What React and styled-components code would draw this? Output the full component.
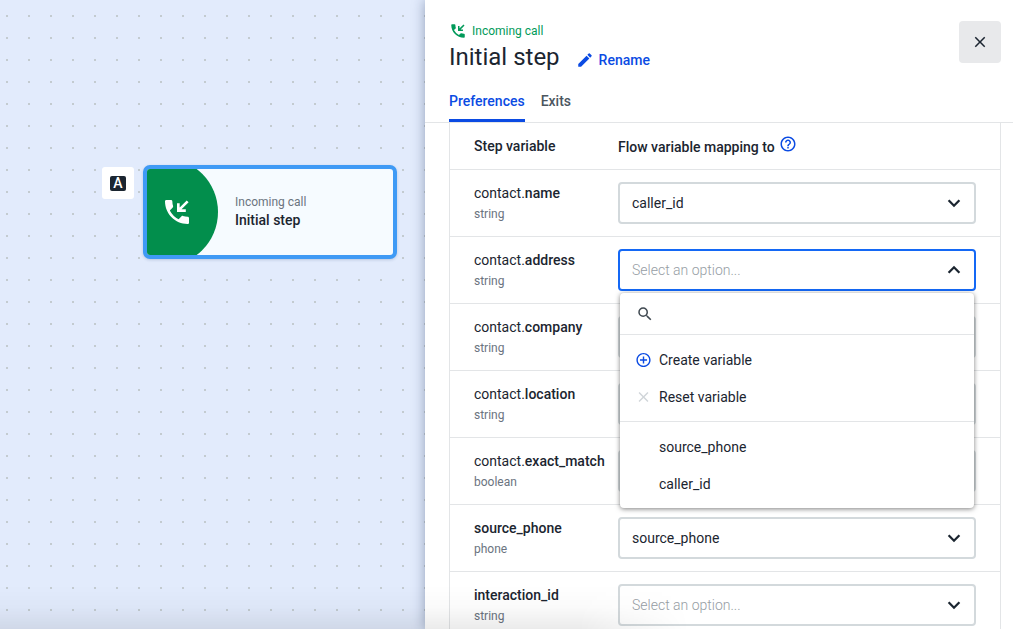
import React, { useState } from 'react';
import styled, { createGlobalStyle } from 'styled-components';
import {
  MdAddCircleOutline,
  MdClose,
  MdEdit,
  MdHelpOutline,
  MdSearch,
} from 'react-icons/md';

const GlobalStyle = createGlobalStyle`
  *, *::before, *::after {
    box-sizing: border-box;
  }
  body {
    margin: 0;
    font-family: Roboto, 'Liberation Sans', sans-serif;
    font-size: 14px;
    line-height: 20px;
    color: #1b2530;
    background: #e2ebfc;
  }
  button, input, select {
    font: inherit;
    color: inherit;
  }
`

const Page = styled.div`
  position: relative;
  display: grid;
  grid-template-columns: minmax(0, 1fr) minmax(0, 588px);
  height: 100vh;
  overflow: hidden;
`

const BottomShade = styled.div`
  position: absolute;
  left: 0;
  bottom: 0;
  width: 68%;
  height: 44px;
  pointer-events: none;
  background: linear-gradient(to top, rgba(0, 0, 0, 0.08), rgba(0, 0, 0, 0.02) 50%, rgba(0, 0, 0, 0));
  mask-image: linear-gradient(to right, #000 84%, transparent);
`

/* canvas */

const Canvas = styled.main`
  position: relative;
  background-color: #e2ebfc;
  background-image: conic-gradient(from 270deg at 2px 2px, #c3cbd0 90deg, transparent 0);
  background-size: 22px 22px;
  background-position: 6px 15px;
`

const Node = styled.div`
  position: absolute;
  top: 165px;
  left: 102px;
  display: flex;
  align-items: flex-start;
  gap: 9px;
`

const NodeBadge = styled.div`
  display: flex;
  align-items: center;
  justify-content: center;
  width: 32px;
  height: 32px;
  margin-top: 2px;
  border-radius: 3px;
  background: #fff;
`

const Letter = styled.span`
  width: 16px;
  border-radius: 2px;
  background: #1b2530;
  color: #fff;
  font-weight: 500;
  line-height: 15px;
  text-align: center;
`

const NodeCard = styled.button`
  display: flex;
  align-items: center;
  width: 254px;
  height: 94px;
  padding: 0;
  border: 4px solid #3f9af5;
  border-radius: 7px;
  background: #f6fbff;
  box-shadow: 0 1px 3px rgba(30, 60, 110, 0.2);
  text-align: left;
  overflow: hidden;
  cursor: pointer;
`

const NodeIcon = styled.span`
  display: flex;
  align-items: center;
  align-self: stretch;
  width: 71px;
  padding-left: 14px;
  color: #fff;
  background: #028e4c;
  clip-path: circle(54px at 17px 50%);
`

const NodeText = styled.span`
  display: flex;
  flex-direction: column;
  padding: 0 0 2px 17px;
`

const NodeType = styled.span`
  font-size: 12px;
  line-height: 18px;
  color: #6b7480;
`

const NodeName = styled.span`
  line-height: 18px;
  font-weight: 500;
`

/* side panel */

const Panel = styled.aside`
  position: relative;
  display: flex;
  flex-direction: column;
  min-height: 0;
  background: #fff;
  box-shadow: 0 0 12px rgba(25, 45, 85, 0.4);
`

const PanelHeader = styled.header`
  display: flex;
  justify-content: space-between;
  align-items: flex-start;
  padding: 21px 12px 0 24px;
`

const StepType = styled.div`
  display: flex;
  align-items: center;
  gap: 5px;
  font-size: 12px;
  color: #029a5a;
`

const TitleRow = styled.div`
  display: flex;
  align-items: center;
  gap: 16px;
`

const Title = styled.h1`
  margin: 0;
  font-size: 24px;
  line-height: 32px;
  font-weight: 400;
`

const RenameButton = styled.button`
  display: flex;
  align-items: center;
  gap: 5px;
  padding: 6px 0 0;
  border: 0;
  background: none;
  font-weight: 500;
  color: #0b4be3;
  cursor: pointer;
`

const CloseButton = styled.button`
  display: flex;
  align-items: center;
  justify-content: center;
  width: 42px;
  height: 42px;
  padding: 0;
  border: 0;
  border-radius: 4px;
  background: #e8e9eb;
  cursor: pointer;
`

const Tabs = styled.nav`
  display: flex;
  gap: 16px;
  padding: 18px 24px 0;
  border-bottom: 1px solid #e3e5e7;
`

const Tab = styled.button`
  padding: 0 0 8px;
  border: 0;
  border-bottom: 3px solid ${({ $active }) => ($active ? '#0b4be3' : 'transparent')};
  background: none;
  font-weight: 500;
  color: ${({ $active }) => ($active ? '#0b4be3' : '#4c565f')};
  cursor: pointer;
`

const PanelBody = styled.div`
  flex: 1;
  min-height: 0;
  padding: 0 12px 0 24px;
  overflow-y: auto;
  scrollbar-width: none;
`

const Table = styled.table`
  width: 100%;
  border-collapse: separate;
  border-spacing: 0;
  border: solid #e3e5e7;
  border-width: 0 1px;
`

const HeadCell = styled.th`
  height: 47px;
  padding: 0 24px 0 ${({ $first }) => ($first ? '24px' : '0')};
  width: ${({ $first }) => ($first ? '168px' : 'auto')};
  border-bottom: 1px solid #e3e5e7;
  text-align: left;
  font-weight: 500;
`

const HeadLabel = styled.span`
  display: flex;
  align-items: flex-end;
  gap: 4px;
`

const HelpButton = styled.button`
  display: flex;
  padding: 0 0 4px;
  border: 0;
  background: none;
  color: #0b4be3;
  cursor: pointer;
`

const NameCell = styled.td`
  padding: 0 0 0 24px;
  border-bottom: 1px solid #e3e5e7;
  white-space: nowrap;
`

const MapCell = styled.td`
  padding: 12px 24px 12px 0;
  border-bottom: 1px solid #e3e5e7;
`

const VarName = styled.label`
  display: block;

  b {
    font-weight: 500;
  }
`

const VarType = styled.div`
  padding-top: 1px;
  font-size: 12px;
  color: #6b7480;
`

const Field = styled.div`
  position: relative;
  display: grid;
  align-items: center;

  > svg {
    grid-area: 1 / 1;
    justify-self: end;
    margin-right: 12px;
    pointer-events: none;
  }
`

const Select = styled.select`
  grid-area: 1 / 1;
  width: 100%;
  height: 42px;
  padding: 0 40px 0 12px;
  border: 2px solid ${({ $open }) => ($open ? '#1468f5' : '#d3d9dc')};
  border-radius: 4px;
  outline: none;
  appearance: none;
  background: #fff;
  font-weight: ${({ $empty }) => ($empty ? 300 : 400)};
  color: ${({ $empty }) => ($empty ? '#969da4' : '#1b2530')};
`

const Menu = styled.div`
  position: absolute;
  z-index: 2;
  top: calc(100% + 2px);
  left: 2px;
  right: 2px;
  border-radius: 4px;
  background: #fff;
  box-shadow: 0 1px 5px rgba(0, 0, 0, 0.5);
`

const SearchRow = styled.label`
  display: flex;
  align-items: center;
  gap: 8px;
  height: 42px;
  padding: 0 16px;
  border-bottom: 1px solid #e3e5e7;
  color: #3f4850;
`

const SearchInput = styled.input`
  flex: 1;
  min-width: 0;
  border: 0;
  outline: none;
  background: none;
`

const MenuGroup = styled.div`
  padding: 6px 0;

  & + & {
    border-top: 1px solid #e3e5e7;
  }
`

const MenuItem = styled.button`
  display: flex;
  align-items: center;
  gap: 7px;
  width: 100%;
  height: 37px;
  padding: 0 15px;
  border: 0;
  background: none;
  text-align: left;
  cursor: pointer;
`

const ItemIcon = styled.span`
  display: flex;
  justify-content: center;
  width: 17px;
  color: ${({ $muted }) => ($muted ? '#d0d5d9' : '#0b4be3')};
`

const IncomingCallIcon = ({ size }) => (
  <svg width={size} height={size} viewBox="0 0 24 24" fill="currentColor" aria-hidden="true">
    <path d="M20 15.5c-1.25 0-2.45-.2-3.57-.57-.35-.11-.74-.03-1.02.24l-2.2 2.2a15.1 15.1 0 0 1-6.59-6.58l2.2-2.21c.28-.27.36-.66.25-1.01A11.4 11.4 0 0 1 8.500 4c0-.55-.45-1-1-1H4c-.55 0-1 .45-1 1 0 9.390 7.610 17 17 17 .55 0 1-.45 1-1v-3.500c0-.55-.45-1-1-1z" />
    <path d="M20 4l-6.800 6.800M13 5.400V11h5.600" fill="none" stroke="currentColor" strokeWidth="2" />
  </svg>
)

const Chevron = ({ up }) => (
  <svg width="20" height="20" viewBox="0 0 20 20" fill="none" stroke="#1b2530" strokeWidth="2.300" aria-hidden="true">
    <path d={up ? 'M4.600 12.700L10 7.300l5.400 5.400' : 'M4.600 7.300L10 12.700l5.400-5.400'} />
  </svg>
)

const variables = ['source_phone', 'caller_id']

const steps = [
  { prefix: 'contact.', name: 'name', type: 'string', value: 'caller_id' },
  { prefix: 'contact.', name: 'address', type: 'string' },
  { prefix: 'contact.', name: 'company', type: 'string' },
  { prefix: 'contact.', name: 'location', type: 'string' },
  { prefix: 'contact.', name: 'exact_match', type: 'boolean' },
  { prefix: '', name: 'source_phone', type: 'phone', value: 'source_phone' },
  { prefix: '', name: 'interaction_id', type: 'string' },
]

const VariableMenu = ({ onPick }) => (
  <Menu>
    <SearchRow>
      <MdSearch size={18} />
      <SearchInput type="text" aria-label="Search variables" />
    </SearchRow>
    <MenuGroup>
      <MenuItem>
        <ItemIcon><MdAddCircleOutline size={18} /></ItemIcon>
        Create variable
      </MenuItem>
      <MenuItem onClick={() => onPick('')}>
        <ItemIcon $muted><MdClose size={18} /></ItemIcon>
        Reset variable
      </MenuItem>
    </MenuGroup>
    <MenuGroup>
      {variables.map((name) => (
        <MenuItem key={name} onClick={() => onPick(name)}>
          <ItemIcon />
          {name}
        </MenuItem>
      ))}
    </MenuGroup>
  </Menu>
)

const VariableRow = ({ step, open, onToggle }) => {
  const [value, setValue] = useState(step.value || '')

  // the native list is replaced by VariableMenu
  const handleMouseDown = (e) => {
    e.preventDefault()
    onToggle()
  }

  const handlePick = (name) => {
    setValue(name)
    onToggle()
  }

  return (
    <tr>
      <NameCell>
        <VarName htmlFor={step.name}>{step.prefix}<b>{step.name}</b></VarName>
        <VarType>{step.type}</VarType>
      </NameCell>
      <MapCell>
        <Field>
          <Select
            id={step.name}
            value={value}
            $open={open}
            $empty={!value}
            onMouseDown={handleMouseDown}
            onChange={(e) => setValue(e.target.value)}
          >
            <option value="">Select an option...</option>
            {variables.map((name) => <option key={name}>{name}</option>)}
          </Select>
          <Chevron up={open} />
          {open && <VariableMenu onPick={handlePick} />}
        </Field>
      </MapCell>
    </tr>
  )
}

const App = () => {
  const [tab, setTab] = useState('Preferences')
  const [openRow, setOpenRow] = useState('address')

  return (
    <>
      <GlobalStyle />
      <Page>
        <Canvas>
          <Node>
            <NodeBadge><Letter>A</Letter></NodeBadge>
            <NodeCard>
              <NodeIcon><IncomingCallIcon size={32} /></NodeIcon>
              <NodeText>
                <NodeType>Incoming call</NodeType>
                <NodeName>Initial step</NodeName>
              </NodeText>
            </NodeCard>
          </Node>
        </Canvas>
        <Panel>
          <PanelHeader>
            <div>
              <StepType><IncomingCallIcon size={18} />Incoming call</StepType>
              <TitleRow>
                <Title>Initial step</Title>
                <RenameButton><MdEdit size={18} />Rename</RenameButton>
              </TitleRow>
            </div>
            <CloseButton aria-label="Close"><MdClose size={18} /></CloseButton>
          </PanelHeader>
          <Tabs>
            {['Preferences', 'Exits'].map((name) => (
              <Tab key={name} $active={tab === name} onClick={() => setTab(name)}>{name}</Tab>
            ))}
          </Tabs>
          <PanelBody>
            <Table>
              <thead>
                <tr>
                  <HeadCell $first>Step variable</HeadCell>
                  <HeadCell>
                    <HeadLabel>
                      Flow variable mapping to
                      <HelpButton aria-label="Help"><MdHelpOutline size={18} /></HelpButton>
                    </HeadLabel>
                  </HeadCell>
                </tr>
              </thead>
              <tbody>
                {steps.map((step) => (
                  <VariableRow
                    key={step.name}
                    step={step}
                    open={openRow === step.name}
                    onToggle={() => setOpenRow(openRow === step.name ? null : step.name)}
                  />
                ))}
              </tbody>
            </Table>
          </PanelBody>
        </Panel>
        <BottomShade />
      </Page>
    </>
  )
};

export default App;
